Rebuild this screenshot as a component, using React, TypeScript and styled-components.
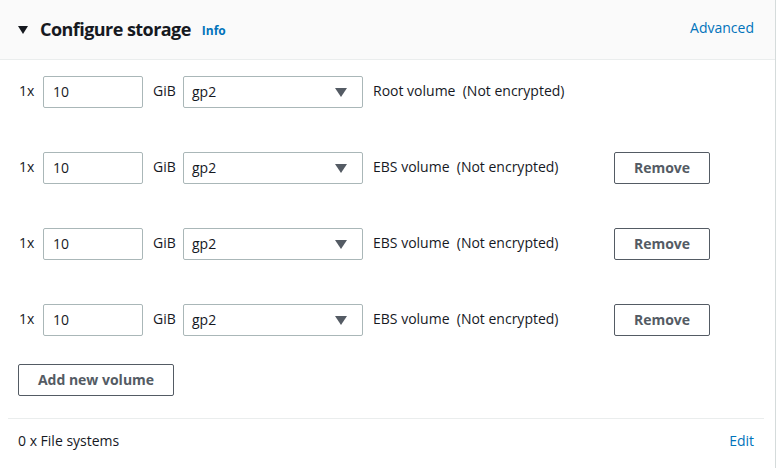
import React from 'react';
import styled, { createGlobalStyle } from 'styled-components';

const GlobalStyle = createGlobalStyle`
  body {
    margin: 0;
    background: #ffffff;
    font-family: 'Open Sans', 'Noto Sans', sans-serif;
    color: #16191f;
  }
`;

const Panel = styled.div`
  width: 776px;
  height: 468px;
  border-right: 1px solid #d5dbdb;
  background: #ffffff;
  box-sizing: border-box;
`;

const Header = styled.div`
  height: 60px;
  box-sizing: border-box;
  background: #fafafa;
  border-bottom: 1px solid #eaeded;
  display: flex;
  align-items: center;
  padding: 0 21px 0 18px;
`;

const Caret = styled.span`
  width: 0;
  height: 0;
  border-left: 5px solid transparent;
  border-right: 5px solid transparent;
  border-top: 8px solid #16191f;
  margin-right: 12px;
  margin-top: 1px;
`;

const Title = styled.h2`
  margin: 0 0 2px 0;
  font-size: 18px;
  font-weight: 700;
  line-height: 22px;
  color: #16191f;
  letter-spacing: -0.55px;
`;

const InfoLink = styled.a`
  margin-left: 11px;
  margin-top: 2px;
  font-size: 12px;
  font-weight: 700;
  color: #0073bb;
  text-decoration: none;
`;

const Link = styled.a<{ $lift?: number }>`
  margin-left: auto;
  margin-bottom: ${p => p.$lift ?? 0}px;
  font-size: 14px;
  color: #0073bb;
  text-decoration: none;
`;

const Body = styled.div`
  padding: 16px 0 0 18px;
  display: flex;
  flex-direction: column;
`;

const VolumeList = styled.div`
  display: flex;
  flex-direction: column;
  gap: 44px;
`;

const Row = styled.div`
  display: flex;
  align-items: center;
  height: 32px;
  font-size: 14px;
`;

const Count = styled.span`
  width: 25px;
  padding: 0 0 3px 1px;
  box-sizing: border-box;
`;

const Unit = styled.span`
  width: 40px;
  padding: 0 0 3px 10px;
  box-sizing: border-box;
`;

const SizeInput = styled.input`
  width: 100px;
  height: 32px;
  box-sizing: border-box;
  border: 1px solid #aab7b8;
  border-radius: 2px;
  padding: 0 9px 2px 9px;
  font-family: inherit;
  font-size: 14px;
  color: #16191f;
  background: #ffffff;
  outline: none;
`;

const Select = styled.div`
  width: 180px;
  height: 32px;
  box-sizing: border-box;
  border: 1px solid #aab7b8;
  border-radius: 2px;
  padding: 0 8px 2px 8px;
  display: flex;
  align-items: center;
  font-size: 14px;
`;

const SelectArrow = styled.span`
  margin-left: auto;
  margin-right: 7px;
  margin-top: 2px;
  width: 0;
  height: 0;
  border-left: 6px solid transparent;
  border-right: 6px solid transparent;
  border-top: 9px solid #545b64;
`;

const Description = styled.span`
  width: 251px;
  padding: 0 0 3px 10px;
  box-sizing: border-box;
  white-space: pre;
`;

const Button = styled.button<{ $width: number }>`
  width: ${p => p.$width}px;
  height: 32px;
  box-sizing: border-box;
  border: 1px solid #545b64;
  border-radius: 2px;
  background: #ffffff;
  color: #545b64;
  font-family: inherit;
  font-size: 14px;
  font-weight: 700;
  padding: 0 0 2px 0;
  cursor: pointer;
`;

const AddRow = styled.div`
  margin-top: 28px;
`;

const Footer = styled.div`
  margin: 22px 11px 0 8px;
  border-top: 1px solid #eaeded;
  height: 43px;
  display: flex;
  align-items: center;
  padding: 0 10px;
  box-sizing: border-box;
  font-size: 14px;
`;

interface Volume {
  kind: string;
  removable: boolean;
}

const volumes: Volume[] = [
  { kind: 'Root volume', removable: false },
  { kind: 'EBS volume', removable: true },
  { kind: 'EBS volume', removable: true },
  { kind: 'EBS volume', removable: true },
];

const App: React.FC = () => (
  <>
    <GlobalStyle />
    <Panel>
      <Header>
        <Caret />
        <Title>Configure storage</Title>
        <InfoLink href="#">Info</InfoLink>
        <Link href="#" $lift={4}>Advanced</Link>
      </Header>
      <Body>
        <VolumeList>
          {volumes.map((v, i) => (
            <Row key={i}>
              <Count>1x</Count>
              <SizeInput defaultValue="10" />
              <Unit>GiB</Unit>
              <Select>
                gp2
                <SelectArrow />
              </Select>
              <Description>{`${v.kind}  (Not encrypted)`}</Description>
              {v.removable && <Button $width={96}>Remove</Button>}
            </Row>
          ))}
        </VolumeList>
        <AddRow>
          <Button $width={156}>Add new volume</Button>
        </AddRow>
      </Body>
      <Footer>
        <span>0 x File systems</span>
        <Link href="#">Edit</Link>
      </Footer>
    </Panel>
  </>
);

export default App;
